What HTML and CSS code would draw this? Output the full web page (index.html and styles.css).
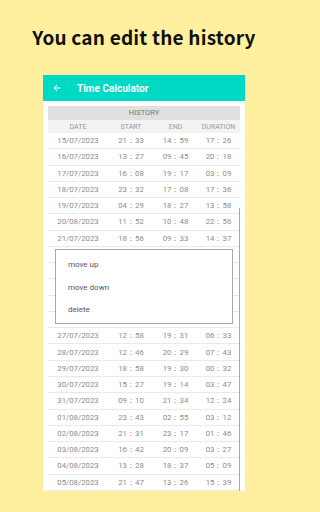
FILE: index.html
```html
<!DOCTYPE html>
<html>
<head>
<meta charset="utf-8">
<link rel="stylesheet" href="styles.css">
</head>
<body>
<h1 class="title">You can edit the history</h1>
<div class="screen">
  <div class="appbar">
    <svg class="back" width="10" height="10" viewBox="0 0 24 24"><path d="M20 11H7.83l5.59-5.59L12 4l-8 8 8 8 1.41-1.41L7.83 13H20v-2z" fill="#fff"/></svg>
    <span class="apptitle">Time Calculator</span>
  </div>
  <div class="content">
    <div class="hist">HISTORY</div>
    <div class="row head"><span>DATE</span><span>START</span><span>END</span><span>DURATION</span></div>
    <div class="row"><span>15/07/2023</span><span>21：33</span><span>14：59</span><span>17：26</span></div>
    <div class="row"><span>16/07/2023</span><span>13：27</span><span>09：45</span><span>20：18</span></div>
    <div class="row"><span>17/07/2023</span><span>16：08</span><span>19：17</span><span>03：09</span></div>
    <div class="row"><span>18/07/2023</span><span>23：32</span><span>17：08</span><span>17：36</span></div>
    <div class="row"><span>19/07/2023</span><span>04：29</span><span>18：27</span><span>13：58</span></div>
    <div class="row"><span>20/08/2023</span><span>11：52</span><span>10：48</span><span>22：56</span></div>
    <div class="row"><span>21/07/2023</span><span>18：56</span><span>09：33</span><span>14：37</span></div>
    <div class="row covered"><span>22/07/2023</span><span>10：12</span><span>11：40</span><span>01：28</span></div>
    <div class="row covered"><span>23/07/2023</span><span>08：05</span><span>17：21</span><span>09：16</span></div>
    <div class="row covered"><span>24/07/2023</span><span>14：44</span><span>20：02</span><span>05：18</span></div>
    <div class="row covered"><span>25/07/2023</span><span>07：30</span><span>12：15</span><span>04：45</span></div>
    <div class="row covered"><span>26/07/2023</span><span>19：09</span><span>22：51</span><span>03：42</span></div>
    <div class="row"><span>27/07/2023</span><span>12：58</span><span>19：31</span><span>06：33</span></div>
    <div class="row"><span>28/07/2023</span><span>12：46</span><span>20：29</span><span>07：43</span></div>
    <div class="row"><span>29/07/2023</span><span>18：58</span><span>19：30</span><span>00：32</span></div>
    <div class="row"><span>30/07/2023</span><span>15：27</span><span>19：14</span><span>03：47</span></div>
    <div class="row"><span>31/07/2023</span><span>09：10</span><span>21：34</span><span>12：24</span></div>
    <div class="row"><span>01/08/2023</span><span>23：43</span><span>02：55</span><span>03：12</span></div>
    <div class="row"><span>02/08/2023</span><span>21：31</span><span>23：17</span><span>01：46</span></div>
    <div class="row"><span>03/08/2023</span><span>16：42</span><span>20：09</span><span>03：27</span></div>
    <div class="row"><span>04/08/2023</span><span>13：28</span><span>18：37</span><span>05：09</span></div>
    <div class="row"><span>05/08/2023</span><span>21：47</span><span>13：26</span><span>15：39</span></div>
    <div class="scrollbar"></div>
  </div>
  <div class="menu">
    <div class="item">move up</div>
    <div class="item">move down</div>
    <div class="item">delete</div>
  </div>
</div>
</body>
</html>
```

FILE: styles.css
```css
html, body {
  margin: 0;
  padding: 0;
}
body {
  background: #fff09f;
  width: 288px;
  height: 512px;
  overflow: hidden;
  font-family: Roboto, "Noto Sans", sans-serif;
}
.title {
  margin: 0;
  padding-top: 25px;
  height: 50px;
  box-sizing: border-box;
  text-align: center;
  font-family: "Noto Sans CJK JP", "Noto Sans", sans-serif;
  font-weight: 700;
  font-size: 19px;
  line-height: 24px;
  letter-spacing: 0.2px;
  color: #111;
}
.screen {
  position: relative;
  margin: 25px 0 0 43px;
  width: 202px;
  height: 416px;
  background: #fff;
  overflow: hidden;
}
.appbar {
  height: 26px;
  background: #00d9c4;
  display: flex;
  align-items: center;
  padding-left: 9px;
}
.back {
  display: block;
}
.apptitle {
  margin-left: 15px;
  color: #fff;
  font-weight: 700;
  font-size: 10px;
}
.content {
  position: relative;
  padding: 5px 5px 0 5px;
}
.hist {
  height: 14px;
  background: #e0e0e0;
  color: #777;
  font-size: 7.5px;
  line-height: 14px;
  text-align: center;
}
.row {
  display: grid;
  grid-template-columns: 60px 46px 43px 43px;
  height: 16.27px;
  align-items: center;
  border-bottom: 1px solid #e9e9e9;
  box-sizing: border-box;
  font-size: 7.8px;
  color: #8c8c8c;
  text-align: center;
}
.row.covered span {
  visibility: hidden;
}
.row.head {
  height: 13px;
  background: #f3f3f3;
  border-bottom: none;
  font-size: 7px;
  color: #999;
}
.scrollbar {
  position: absolute;
  right: 5px;
  top: 107px;
  bottom: 0;
  width: 1.5px;
  background: #aaa;
}
.menu {
  position: absolute;
  left: 12px;
  top: 174px;
  width: 178px;
  height: 75px;
  box-sizing: border-box;
  background: #fff;
  border: 1px solid #a8a8a8;
  padding-top: 4px;
}
.item {
  height: 22.5px;
  line-height: 22.5px;
  padding-left: 12px;
  font-size: 8px;
  color: #555;
}
```
